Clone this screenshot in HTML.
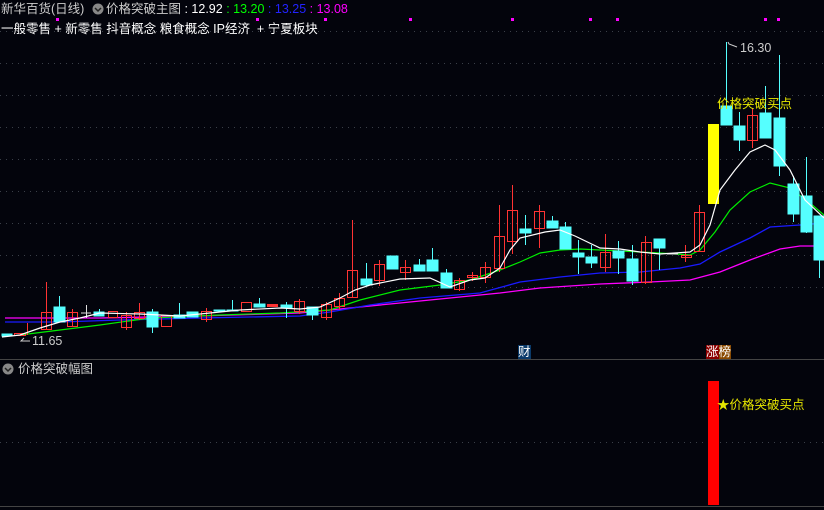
<!DOCTYPE html>
<html><head><meta charset="utf-8"><style>
html,body{margin:0;padding:0;background:#03040c;width:824px;height:510px;overflow:hidden;font-family:"Liberation Sans","Noto Sans CJK SC",sans-serif;}
.t{position:absolute;font-size:12.5px;white-space:nowrap;line-height:14px;}
</style></head><body>
<svg width="824" height="510" style="position:absolute;left:0;top:0" xmlns="http://www.w3.org/2000/svg">
<g stroke="#3a3f48" stroke-width="1" stroke-dasharray="1,5">
<line x1="0" y1="31.5" x2="824" y2="31.5"/>
<line x1="0" y1="63.5" x2="824" y2="63.5"/>
<line x1="0" y1="95.5" x2="824" y2="95.5"/>
<line x1="0" y1="127.5" x2="824" y2="127.5"/>
<line x1="0" y1="159.5" x2="824" y2="159.5"/>
<line x1="0" y1="191.5" x2="824" y2="191.5"/>
<line x1="0" y1="223.5" x2="824" y2="223.5"/>
<line x1="0" y1="255.5" x2="824" y2="255.5"/>
<line x1="0" y1="287.5" x2="824" y2="287.5"/>
<line x1="0" y1="442.5" x2="824" y2="442.5"/>
</g>
<line x1="0" y1="359.5" x2="824" y2="359.5" stroke="#444" />
<line x1="0" y1="506.5" x2="824" y2="506.5" stroke="#444" />
<g fill="#ff00ff">
<rect x="56" y="18" width="3" height="3"/><rect x="256" y="18" width="3" height="3"/><rect x="324" y="18" width="3" height="3"/><rect x="409" y="18" width="3" height="3"/><rect x="511" y="18" width="3" height="3"/><rect x="589" y="18" width="3" height="3"/><rect x="616" y="18" width="3" height="3"/><rect x="764" y="18" width="3" height="3"/><rect x="777" y="18" width="3" height="3"/>
</g>
<!-- MAs -->
<polyline fill="none" stroke="#ff00ff" stroke-width="1.3" points="5,318 100,318 200,316 300,313 350,308 400,303 450,298 500,293 540,288 600,284 650,282 690,280 720,272 750,260 780,249 800,246 824,246"/>
<polyline fill="none" stroke="#1a1aff" stroke-width="1.3" points="5,322 60,322 120,320 200,318 300,316 330,312 370,305 420,298 480,293 520,282 560,277 600,273 640,272 680,268 700,264 720,252 750,238 770,227 800,225 824,223"/>
<polyline fill="none" stroke="#00ee00" stroke-width="1.2" points="20,335 60,330 100,325 150,318 220,315 280,313 330,310 360,300 400,290 440,285 470,280 500,270 520,262 540,253 560,250 580,249 620,251 660,253 690,255 700,250 715,232 730,210 750,192 770,183 790,188 810,203 824,215"/>
<!-- candles -->
<g stroke-width="1">
<g fill="#5ff" stroke="#5ff">
<rect x="2" y="334" width="10" height="2"/>
<line x1="59.5" y1="296" x2="59.5" y2="322"/><rect x="54" y="307" width="11" height="15"/>
<line x1="99.5" y1="309" x2="99.5" y2="316"/><rect x="94" y="312" width="10" height="4"/>
<line x1="152.5" y1="309" x2="152.5" y2="333"/><rect x="147" y="312" width="11" height="15"/>
<line x1="179.5" y1="303" x2="179.5" y2="318"/><rect x="174" y="315" width="11" height="3"/>
<rect x="187" y="312" width="11" height="5"/>
<rect x="214" y="310" width="11" height="1"/>
<line x1="232.5" y1="300" x2="232.5" y2="311"/><rect x="227" y="310" width="11" height="1"/>
<line x1="259.5" y1="298" x2="259.5" y2="307"/><rect x="254" y="304" width="11" height="3"/>
<line x1="286.5" y1="302" x2="286.5" y2="318"/><rect x="281" y="305" width="11" height="3"/>
<line x1="312.5" y1="307" x2="312.5" y2="320"/><rect x="307" y="307" width="11" height="8"/>
<line x1="366.5" y1="263" x2="366.5" y2="286"/><rect x="361" y="279" width="11" height="6"/>
<rect x="387" y="256" width="11" height="13"/>
<line x1="419.5" y1="259" x2="419.5" y2="271"/><rect x="414" y="265" width="11" height="6"/>
<line x1="432.5" y1="248" x2="432.5" y2="271"/><rect x="427" y="260" width="11" height="11"/>
<line x1="446.5" y1="269" x2="446.5" y2="288"/><rect x="441" y="273" width="11" height="15"/>
<line x1="525.5" y1="215" x2="525.5" y2="245"/><rect x="520" y="229" width="11" height="4"/>
<line x1="552.5" y1="216" x2="552.5" y2="228"/><rect x="547" y="221" width="11" height="7"/>
<line x1="565.5" y1="222" x2="565.5" y2="249"/><rect x="560" y="227" width="11" height="22"/>
<line x1="578.5" y1="240" x2="578.5" y2="274"/><rect x="573" y="253" width="11" height="4"/>
<line x1="591.5" y1="245" x2="591.5" y2="268"/><rect x="586" y="257" width="11" height="6"/>
<line x1="618.5" y1="241" x2="618.5" y2="274"/><rect x="613" y="251" width="11" height="7"/>
<line x1="632.5" y1="245" x2="632.5" y2="285"/><rect x="627" y="259" width="11" height="22"/>
<line x1="659.5" y1="239" x2="659.5" y2="270"/><rect x="654" y="239" width="11" height="9"/>
<line x1="726.5" y1="42" x2="726.5" y2="125"/><rect x="721" y="106" width="11" height="19"/>
<line x1="739.5" y1="112" x2="739.5" y2="151"/><rect x="734" y="126" width="11" height="14"/>
<line x1="765.5" y1="86" x2="765.5" y2="138"/><rect x="760" y="113" width="11" height="25"/>
<line x1="779.5" y1="55" x2="779.5" y2="176"/><rect x="774" y="118" width="11" height="48"/>
<line x1="793.5" y1="176" x2="793.5" y2="222"/><rect x="788" y="184" width="11" height="30"/>
<line x1="806.5" y1="157" x2="806.5" y2="233"/><rect x="801" y="196" width="11" height="36"/>
<line x1="819.5" y1="216" x2="819.5" y2="278"/><rect x="814" y="216" width="11" height="44"/>
</g>
<g fill="none" stroke="#ff3333">
<line x1="27.5" y1="323" x2="27.5" y2="335"/><rect x="14.5" y="333.5" width="11" height="2"/>
<line x1="46.5" y1="282" x2="46.5" y2="330"/><rect x="41.5" y="312.5" width="10" height="17"/>
<line x1="72.5" y1="309" x2="72.5" y2="327"/><rect x="67.5" y="312.5" width="10" height="14"/>
<rect x="108.5" y="311.5" width="9" height="6"/>
<line x1="126.5" y1="312" x2="126.5" y2="330"/><rect x="121.5" y="315.5" width="10" height="12"/>
<line x1="139.5" y1="303" x2="139.5" y2="320"/><rect x="134.5" y="312.5" width="10" height="6"/>
<rect x="161.5" y="315.5" width="10" height="11"/>
<line x1="206.5" y1="308" x2="206.5" y2="322"/><rect x="201.5" y="311.5" width="10" height="8"/>
<rect x="241.5" y="302.5" width="10" height="9"/>
<rect x="267.5" y="304.5" width="10" height="2" fill="#ff3333"/>
<line x1="299.5" y1="299" x2="299.5" y2="314"/><rect x="294.5" y="301.5" width="10" height="10"/>
<line x1="326.5" y1="302" x2="326.5" y2="320"/><rect x="321.5" y="304.5" width="10" height="13"/>
<line x1="339.5" y1="293" x2="339.5" y2="310"/><rect x="334.5" y="298.5" width="10" height="8"/>
<line x1="352.5" y1="220" x2="352.5" y2="298"/><rect x="347.5" y="270.5" width="10" height="27"/>
<line x1="379.5" y1="260" x2="379.5" y2="286"/><rect x="374.5" y="264.5" width="10" height="16"/>
<line x1="405.5" y1="260" x2="405.5" y2="280"/><rect x="400.5" y="267.5" width="10" height="5"/>
<line x1="459.5" y1="278" x2="459.5" y2="291"/><rect x="454.5" y="280.5" width="10" height="9"/>
<line x1="472.5" y1="272" x2="472.5" y2="281"/><rect x="467.5" y="275.5" width="10" height="2"/>
<line x1="485.5" y1="262" x2="485.5" y2="283"/><rect x="480.5" y="267.5" width="10" height="10"/>
<line x1="499.5" y1="205" x2="499.5" y2="272"/><rect x="494.5" y="236.5" width="10" height="32"/>
<line x1="512.5" y1="185" x2="512.5" y2="254"/><rect x="507.5" y="210.5" width="10" height="31"/>
<line x1="539.5" y1="205" x2="539.5" y2="248"/><rect x="534.5" y="211.5" width="10" height="17"/>
<line x1="605.5" y1="234" x2="605.5" y2="272"/><rect x="600.5" y="252.5" width="10" height="15"/>
<line x1="645.5" y1="236" x2="645.5" y2="284"/><rect x="641.5" y="242.5" width="10" height="40"/>
<line x1="685.5" y1="245" x2="685.5" y2="262"/><rect x="681.5" y="255.5" width="10" height="2"/>
<line x1="699.5" y1="205" x2="699.5" y2="252"/><rect x="694.5" y="212.5" width="10" height="39"/>
<line x1="752.5" y1="108" x2="752.5" y2="148"/><rect x="747.5" y="115.5" width="10" height="25"/>
</g>
<g stroke="#ddd"><line x1="81" y1="313" x2="91" y2="313"/><line x1="86.5" y1="305" x2="86.5" y2="318"/><line x1="667" y1="254" x2="678" y2="254"/></g>
<rect x="708" y="124" width="11" height="80" fill="#ffff00"/>
</g>
<polyline fill="none" stroke="#fff" stroke-width="1.2" points="2,337 20,335 40,328 60,322 80,318 100,313 140,314 180,316 210,313 240,310 280,308 300,309 320,307 340,298 355,290 370,285 400,279 430,278 450,287 470,280 485,278 500,268 510,250 520,238 545,232 560,230 575,236 600,248 620,249 640,252 660,254 690,252 700,245 710,225 720,190 735,170 750,152 765,145 775,150 790,170 805,200 824,218"/>
<rect x="708" y="381" width="11" height="124" fill="#ff0000"/>
<polyline fill="none" stroke="#ccc" points="737,47 729,44 728,42"/>
<polyline fill="none" stroke="#ccc" points="30,341 21,341 24,338"/>
<circle cx="98" cy="9" r="5.5" fill="#888"/><polyline points="95,8 98,11 101,8" fill="none" stroke="#222" stroke-width="1.5"/>
<circle cx="8" cy="369" r="5.5" fill="#888"/><polyline points="5,368 8,371 11,368" fill="none" stroke="#222" stroke-width="1.5"/>
</svg>
<div class="t" style="left:1px;top:2px;color:#ccc">新华百货(日线)</div>
<div class="t" style="left:106px;top:2px;color:#ccc">价格突破主图 <span style="color:#fff">: 12.92</span> <span style="color:#0f0">: 13.20</span> <span style="color:#22f">: 13.25</span> <span style="color:#f0f">: 13.08</span></div>
<div class="t" style="left:1px;top:22px;color:#fff">一般零售 + 新零售 抖音概念 粮食概念 IP经济 &nbsp;+ 宁夏板块</div>
<div class="t" style="left:740px;top:41px;color:#ccc">16.30</div>
<div class="t" style="left:717px;top:97px;color:#e6e600">价格突破买点</div>
<div class="t" style="left:32px;top:334px;color:#ccc">11.65</div>
<div class="t" style="left:518px;top:345px;color:#fff;background:#0a3a6a">财</div>
<div class="t" style="left:706px;top:345px;color:#fff"><span style="background:#8a0000">涨</span><span style="background:#8a4a00">榜</span></div>
<div class="t" style="left:18px;top:362px;color:#ccc">价格突破幅图</div>
<div class="t" style="left:717px;top:398px;color:#e6e600">★价格突破买点</div>
</body></html>
